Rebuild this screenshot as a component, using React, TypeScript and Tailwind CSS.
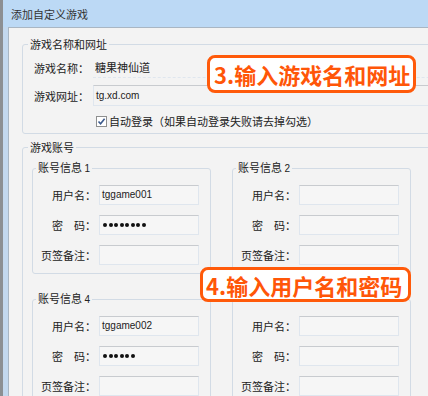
import React from "react";

const cjk = "font-['Noto_Sans_CJK_SC',sans-serif]";
const latin = "font-['Liberation_Sans','Noto_Sans_CJK_SC',sans-serif]";

const Field = ({ children }: { children?: React.ReactNode }) => (
  <div
    className={`flex h-[20px] w-[100px] items-center border border-[#dfe6ee] border-t-[#c8cbcf] bg-[#f6f6f6] pl-[2px] text-[10px] text-[#222] ${latin}`}
  >
    {children}
  </div>
);

const Dots = ({ n }: { n: number }) => (
  <span className="flex gap-[1.5px] pl-[1px]">
    {Array.from({ length: n }).map((_, i) => (
      <span key={i} className="h-[4px] w-[4px] rounded-full bg-[#111]" />
    ))}
  </span>
);

type Account = { no: number; user?: string; pass?: number; hidden?: boolean };

const AccountBox = ({ no, user, pass, hidden }: Account) => (
  <fieldset className="rounded-[3px] border border-[#d2dbe5] px-0 pb-[8px] pt-[8px]">
    <legend className={`ml-[3px] px-[2px] text-[11px] leading-[16px] text-[#222] ${hidden ? "invisible" : ""}`}>
      账号信息 <span className={`text-[10px] ${latin}`}>{no}</span>
    </legend>
    <div className="flex flex-col gap-[10px]">
      <div className="flex items-center">
        <span className="w-[63px] text-right">用户名：</span>
        <div className="ml-[3px]">
          <Field>{user}</Field>
        </div>
      </div>
      <div className="flex items-center">
        <span className="w-[63px] text-right">密　码：</span>
        <div className="ml-[3px]">
          <Field>{pass ? <Dots n={pass} /> : null}</Field>
        </div>
      </div>
      <div className="flex items-center">
        <span className="w-[63px] text-right">页签备注：</span>
        <div className="ml-[3px]">
          <Field />
        </div>
      </div>
    </div>
  </fieldset>
);

// box 5's caption sits under the orange note
const accounts: Account[] = [
  { no: 1, user: "tggame001", pass: 8 },
  { no: 2 },
  { no: 4, user: "tggame002", pass: 6 },
  { no: 5, hidden: true },
];

export default function App() {
  return (
    <div className={`relative h-[396px] w-[428px] overflow-hidden bg-[#c3d8ee] text-[11px] leading-[16px] text-[#222] ${cjk}`}>
      <div className="flex h-full w-[580px] flex-col border-l-[3px] border-[#8c8f93]">
        {/* title bar */}
        <div className="flex h-[27px] shrink-0 items-center bg-[#bcd9f5] pl-[8px] text-[#333]">
          添加自定义游戏
        </div>

        {/* client */}
        <div className="ml-[5px] flex-1 border-l border-t border-[#a9b6c3] bg-[#f3f3f3] pl-[13px] pt-[8px]">
          {/* game name and url */}
          <fieldset className="rounded-[3px] border border-[#d2dbe5] pb-[4px] pl-[11px]">
            <legend className="ml-[-6px] px-[2px]">游戏名称和网址</legend>
            <div className="mt-[5px] flex items-center">
              <span className="w-[59px]">游戏名称：</span>
              <div className="flex h-[21px] flex-1 items-center border-b border-dashed border-[#dfe6ee] pl-[2px]">
                糖果神仙道
              </div>
            </div>
            <div className="mt-[7px] flex items-center">
              <span className="w-[59px]">游戏网址：</span>
              <div className={`flex h-[21px] flex-1 items-center border border-[#dfe6ee] border-t-[#c8cbcf] pl-[2px] text-[10px] ${latin}`}>
                tg.xd.com
              </div>
            </div>
            <div className="ml-[62px] mt-[7px] flex items-center gap-[2px]">
              <span className="flex h-[11px] w-[11px] items-center justify-center border border-[#8e8f8f] bg-white">
                <svg width="9" height="9" viewBox="0 0 9 9">
                  <path d="M1.5 4.5 L3.6 6.8 L7.6 1.8" fill="none" stroke="#3c5a8c" strokeWidth="1.6" />
                </svg>
              </span>
              <span>自动登录（如果自动登录失败请去掉勾选）</span>
            </div>
          </fieldset>

          {/* accounts */}
          <fieldset className="mt-[5px] rounded-[3px] border border-[#d2dbe5] pl-[9px]">
            <legend className="ml-[-4px] px-[2px]">游戏账号</legend>
            <div className="mt-[4px] grid grid-cols-[179px_179px] gap-x-[21px] gap-y-[16px]">
              {accounts.map((a) => (
                <AccountBox key={a.no} {...a} />
              ))}
            </div>
          </fieldset>
        </div>
      </div>

      {/* callouts */}
      <div className="absolute left-[207px] top-[55px] flex h-[38px] w-[209px] items-center rounded-[8px] border-[3px] border-[#ff5a0a] bg-white pl-[4px] text-[22px] font-bold leading-none text-[#ff5608]">
        3.输入游戏名和网址
      </div>
      <div className="absolute left-[200px] top-[267px] flex h-[35px] w-[211px] items-center rounded-[8px] border-[3px] border-[#ff5a0a] bg-white pl-[3px] text-[22px] font-bold leading-none text-[#ff5608]">
        4.输入用户名和密码
      </div>
    </div>
  );
}
